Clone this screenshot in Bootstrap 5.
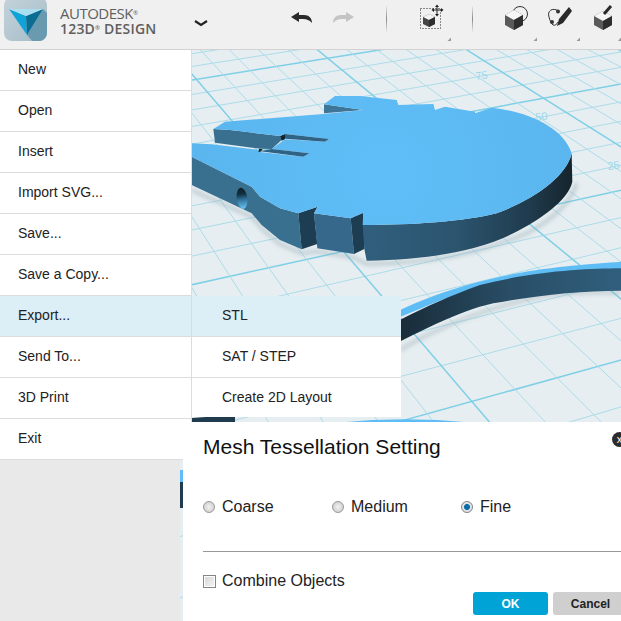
<!DOCTYPE html>
<html lang="en">
<head>
  <meta charset="UTF-8">
  <title>123D Design</title>
  <meta name="viewport" content="width=device-width, initial-scale=1">
  <link href="https://cdn.jsdelivr.net/npm/bootstrap@5.3.0/dist/css/bootstrap.min.css" rel="stylesheet">
  <style>
    body { background: #e9e9e9; font-family: "Liberation Sans", Arial, sans-serif; }
    .app-shell { width: 621px; height: 621px; background: #e9e9e9; }
    .scene { left: 180px; top: 50px; width: 441px; height: 571px; }
    .toolbar { height: 50px; background: #f0f0f0; border-bottom: 1px solid #d2d2d2; }
    .brand { margin-left: 10px; width: 134px; font-family: "Open Sans", sans-serif; color: #5f5f5f; padding-top: 5px; }
    .brand-top { font-size: 15px; line-height: 16px; letter-spacing: -.5px; }
    .brand-bottom { font-size: 14px; line-height: 15px; font-weight: 600; letter-spacing: .2px; }
    .brand sup { font-size: 6px; top: -.7em; }
    .chevron { margin-right: 78px; }
    .tool-sep { width: 1px; height: 26px; margin-top: 6px; background: linear-gradient(#e8e8e8, #8a8a8a 50%, #e8e8e8); }
    .sep-a { margin-left: 6px; margin-right: 13px; }
    .sep-b { margin-left: 6px; margin-right: 27px; }
    .file-menu { width: 192px; }
    .file-menu .list-group-item, .sub-menu .list-group-item {
      height: 41px; padding: 0 0 2px 18px; display: flex; align-items: center;
      font-size: 14px; color: #222; border-color: #dcdcdc; border-width: 0 0 1px 0;
    }
    .file-menu .list-group-item { border-right: 1px solid #dcdcdc; }
    .file-menu .is-open, .sub-menu .is-open { background: #dceef6; }
    .sub-menu { left: 192px; top: 246px; width: 209px; }
    .sub-menu .list-group-item { padding-left: 30px; }
    .sub-menu .list-group-item:last-child { height: 39px; padding-bottom: 0; border-bottom: 0; }
    .mesh-dialog { left: 180px; top: 417px; width: 460px; height: 204px; padding: 5px 0 0 3px; }
    .mesh-body { background: #fff; height: 100%; padding: 12px 0 0 20px; }
    .mesh-title { font-size: 21px; line-height: 26px; color: #111; margin: 0 0 35px; font-weight: 400; }
    .mesh-opt { width: 129px; font-size: 16px; color: #222; line-height: 24px; margin: 0; }
    .mesh-input, .mesh-input:checked { width: 12px; height: 12px; margin: 0 7px 0 0; float: none; border: 1px solid #9a9a9a; background-image: radial-gradient(circle, #f2f2f2, #c6c6c6); }
    .mesh-input:checked { background-image: radial-gradient(circle, #0b6ea8 0, #0b6ea8 2.6px, #e2e2e2 3.4px); border-color: #8e8e8e; }
    .mesh-dialog .mesh-check { width: 13px; height: 13px; margin: 0 6px 0 0; border-radius: 0; border: 1px solid #858585; background-image: linear-gradient(135deg, #d4d4d4, #f6f6f6); box-shadow: inset 0 0 0 1px #fff; }
    .mesh-rule { margin: 32px 0 17px; border-color: #999; opacity: 1; }
    .mesh-btn { position: absolute; top: 170px; width: 75px; height: 23px; padding: 0; font-size: 12px; font-weight: 700; border: 0; border-radius: 3px; }
    .btn-ok { left: 290px; background: #00a3d5; color: #fff; }
    .btn-no { left: 370px; background: #cfcfcf; color: #222; }
    .mesh-close { left: 429px; top: 10px; width: 15px; height: 15px; background: #2c2c2c; color: #fff; font-size: 11px; line-height: 14px; text-align: center; }
  </style>
</head>
<body class="m-0">
  <div class="app-shell position-relative overflow-hidden">

    <!-- 3d view -->
    <svg class="scene position-absolute" viewBox="180 50 441 571" id="scene">
      <defs>
        <linearGradient id="rim" gradientUnits="userSpaceOnUse" x1="550" y1="0" x2="1177" y2="0">
          <stop offset="0" stop-color="#305f7d"/><stop offset=".45" stop-color="#2b546e"/><stop offset=".8" stop-color="#1f3b4d"/><stop offset="1" stop-color="#16242c"/>
        </linearGradient>
        <linearGradient id="rim2" gradientUnits="userSpaceOnUse" x1="60" y1="0" x2="723" y2="0">
          <stop offset="0" stop-color="#192c39"/><stop offset=".5" stop-color="#294e66"/><stop offset="1" stop-color="#305f7d"/>
        </linearGradient>
        <radialGradient id="topface" gradientUnits="userSpaceOnUse" cx="620" cy="370" r="700">
          <stop offset="0" stop-color="#5fbef8"/><stop offset="1" stop-color="#5ab4ec"/>
        </radialGradient>
        <linearGradient id="bore" x1="0" y1="0" x2="0" y2="1">
          <stop offset="0" stop-color="#0f1f29"/><stop offset=".3" stop-color="#14303f"/><stop offset=".55" stop-color="#2f7099"/><stop offset="1" stop-color="#6cc4f6"/>
        </linearGradient>
        <filter id="soft"><feGaussianBlur stdDeviation="6"/></filter>
      </defs>
      <rect x="180" y="50" width="441" height="571" fill="#e6eef1"/>
      <g id="gridLines" fill="none"></g>
      <g fill="#9bd8ea" font-family="Liberation Sans, sans-serif" font-size="11">
        <text transform="translate(476 80) rotate(-8)">75</text>
        <text transform="translate(536 121) rotate(-8)">50</text>
        <text transform="translate(608 170) rotate(-8)">25</text>
      </g>

      <!-- falcon, traced in 3x coordinates -->
      <g transform="translate(180 50) scale(.33333)">
        <path d="M35 420 215 500 250 540 300 582 365 610 410 604 520 622 560 642C750 640 900 612 1050 545 1130 500 1175 450 1190 400" fill="none" stroke="#8fa3ad" stroke-width="10" opacity=".5" filter="url(#soft)"/>
        <path d="M35 320 215 410 240 440 300 475 355 490 365 598 300 570 245 525 215 490 35 405Z" fill="#39708f"/>
        <path d="M355 490 413 470 402 490 412 582 365 598Z" fill="#1d3d52"/>
        <path d="M402 490 512 505 522 612 412 595Z" fill="#35688a"/>
        <path d="M512 505 550 488 553 597 522 612Z" fill="#1d3d52"/>
        <path d="M548 525C700 525 850 515 950 490 1060 450 1160 380 1175 310L1177 395C1165 450 1080 510 1000 550 900 600 750 630 560 632L553 597Z" fill="url(#rim)"/>
        <ellipse cx="186" cy="445" rx="16" ry="32" fill="url(#bore)" transform="rotate(-8 186 445)"/>
        <path d="M432 163 432 190 550 180Z" fill="#3d7699"/>
        <path d="M100 237 105 278 240 296 275 297 305 270 300 258 150 240Z" fill="#39708f"/>
        <path d="M300 258 315 252 315 268 305 272Z" fill="#0f2633"/>
        <path d="M238 296 248 298 240 307 233 304Z" fill="#102834"/>
        <path d="M35 280 95 283 238 300 233 305 370 320 388 310 275 297 315 268 435 275 447 267 315 252 300 258 150 240 100 237 135 215 430 192 550 180 432 163 465 138 540 138 650 150 655 165 760 162 765 180 795 170 885 185 885 190 935 173C1040 185 1150 230 1175 310 1160 380 1060 450 950 490 850 515 700 525 548 525L550 488 512 505 402 490 413 470 355 490 300 475 240 440 215 410 35 320Z" fill="url(#topface)"/>
        <path d="M315 252 447 267 435 275 315 266Z" fill="#2f6385"/>
        <path d="M240 304 370 320 388 310 275 297Z" fill="#2f6385"/>
      </g>

      <!-- second part, lower right -->
      <g transform="translate(380 250) scale(.33333)">
        <path d="M60 300C160 240 300 175 500 136 600 124 680 126 723 128" stroke="#98a9b0" stroke-width="12" fill="none" opacity=".45" filter="url(#soft)"/>
        <path d="M-80 255C60 170 200 112 400 72 520 48 640 42 723 35V60C560 60 420 78 300 112 200 140 100 185 -80 260Z" fill="#5fbdf6"/>
        <path d="M-80 290C0 240 120 170 300 105 470 62 620 56 723 55V122C600 122 480 135 340 160 230 185 130 240 -80 345Z" fill="url(#rim2)"/>
      </g>

      <!-- third part, mostly under the dialog -->
      <path d="M340 424C380 420 420 419 470 424" fill="none" stroke="#5fbdf6" stroke-width="3"/>
      <path d="M180 420C195 417 215 416 235 416V424H180Z" fill="#1f3b4d"/>
      <path d="M178 470H186V482H178Z" fill="#5fbdf6"/>
      <path d="M178 482H186V508H178Z" fill="#1f3b4d"/>
    </svg>

    <header class="toolbar position-relative d-flex align-items-start">
      <svg width="50" height="50" viewBox="0 0 50 50" class="flex-shrink-0">
        <defs>
          <linearGradient id="logoBg" x1="0" y1="0" x2="1" y2="1">
            <stop offset="0" stop-color="#c5d3da"/><stop offset="1" stop-color="#a5bcc8"/>
          </linearGradient>
          <clipPath id="logoClip"><rect x="4" y="-3" width="43" height="44" rx="8"/></clipPath>
        </defs>
        <rect x="4" y="-3" width="43" height="44" rx="8" fill="url(#logoBg)"/>
        <path d="M27 35 43 9 60 26 40 50Z" fill="#6a9ab0" clip-path="url(#logoClip)"/>
        <path d="M9 9 26 16 27 35Z" fill="#0fa3d8"/>
        <path d="M43 9 26 16 27 35Z" fill="#0b6d92"/>
        <path d="M9 9H43L26 16Z" fill="#a9dff0"/>
      </svg>
      <div class="brand flex-shrink-0">
        <div class="brand-top">AUTODESK<sup>®</sup></div>
        <div class="brand-bottom">123D<sup>®</sup> DESIGN</div>
      </div>
      <svg class="chevron flex-shrink-0" width="14" height="50" viewBox="194 0 14 50">
        <path d="M195 21 201 25 207 21" fill="none" stroke="#222" stroke-width="2.2"/>
      </svg>
      <!-- undo redo -->
      <svg width="94" height="50" viewBox="286 0 94 50" class="flex-shrink-0">
        <path d="M291 17 299 12V15H304C309 15 312 18 312 23 309 20 307 19 303 19H299V22Z" fill="#2a2a2a"/>
        <path d="M354 17 346 12V15H341C336 15 333 18 333 23 336 20 338 19 342 19H346V22Z" fill="#c4c4c4"/>
      </svg>
      <div class="tool-sep sep-a flex-shrink-0"></div>
      <!-- move -->
      <svg width="66" height="50" viewBox="400 0 66 50" class="flex-shrink-0">
        <rect x="420.500" y="8.500" width="20" height="20" fill="none" stroke="#222" stroke-dasharray="1 2"/>
        <path d="M423 17 429 14 435 17V24L429 27 423 24Z" fill="#454545"/>
        <path d="M423 17 429 14 435 17 429 20Z" fill="#f4f4f4"/>
        <path d="M429 20 435 17V24L429 27Z" fill="#2e2e2e"/>
        <path d="M437 6V15M433 10H442" stroke="#222" stroke-width="1"/>
        <path d="M437 4.500 439 7H435ZM437 16.500 439 14H435ZM431.500 10 434 8V12ZM443.500 10 441 8V12Z" fill="#222"/>
        <path d="M451 37.500V41H447.500Z" fill="#999"/>
      </svg>
      <div class="tool-sep sep-b flex-shrink-0"></div>
      <!-- primitives -->
      <svg width="43" height="50" viewBox="500 0 43 50" class="flex-shrink-0">
        <circle cx="520" cy="14" r="7.500" fill="#f0f0f0" stroke="#333" stroke-width="1"/>
        <path d="M505 15 514 10 523 15V25L514 30 505 25Z" fill="#5a5a5a"/>
        <path d="M505 15 514 10 523 15 514 20Z" fill="#f6f6f6"/>
        <path d="M514 20 523 15V25L514 30Z" fill="#2e2e2e"/>
        <path d="M537 37.500V41H533.500Z" fill="#999"/>
      </svg>
      <!-- sketch -->
      <svg width="43" height="50" viewBox="543 0 43 50" class="flex-shrink-0">
        <path d="M559 11C552 7 547 11 549 17 550 21 551 23 553 25 555 26 557 24 558 22" fill="none" stroke="#333" stroke-width="1"/>
        <circle cx="558" cy="11.500" r="2" fill="#333"/>
        <circle cx="552" cy="22" r="2" fill="#333"/>
        <path d="M569 7 572 11 563 23 557 26 559 19Z" fill="#2a2a2a"/>
        <path d="M580 37.500V41H576.500Z" fill="#999"/>
      </svg>
      <!-- modify -->
      <svg width="35" height="50" viewBox="586 0 35 50" class="flex-shrink-0">
        <path d="M594 16 603 11 612 16V25L603 30 594 25Z" fill="#5a5a5a"/>
        <path d="M594 16 603 11 612 16 603 21Z" fill="#f6f6f6"/>
        <path d="M603 21 612 16V25L603 30Z" fill="#2e2e2e"/>
        <path d="M604 14 611 6" stroke="#2a2a2a" stroke-width="3"/>
        <path d="M621 37.500V41H618Z" fill="#999"/>
      </svg>
    </header>

    <div class="position-relative">
      <div class="list-group rounded-0 file-menu">
        <div class="list-group-item rounded-0">New</div>
        <div class="list-group-item rounded-0">Open</div>
        <div class="list-group-item rounded-0">Insert</div>
        <div class="list-group-item rounded-0">Import SVG...</div>
        <div class="list-group-item rounded-0">Save...</div>
        <div class="list-group-item rounded-0">Save a Copy...</div>
        <div class="list-group-item rounded-0 is-open">Export...</div>
        <div class="list-group-item rounded-0">Send To...</div>
        <div class="list-group-item rounded-0">3D Print</div>
        <div class="list-group-item rounded-0">Exit</div>
      </div>
      <div class="list-group rounded-0 sub-menu position-absolute">
        <div class="list-group-item rounded-0 is-open">STL</div>
        <div class="list-group-item rounded-0">SAT / STEP</div>
        <div class="list-group-item rounded-0">Create 2D Layout</div>
      </div>
    </div>

    <div class="mesh-dialog position-absolute">
      <div class="mesh-body position-relative">
        <h5 class="mesh-title">Mesh Tessellation Setting</h5>
        <div class="d-flex">
          <label class="mesh-opt d-flex align-items-center"><input class="form-check-input mesh-input" type="radio" name="mesh">Coarse</label>
          <label class="mesh-opt d-flex align-items-center"><input class="form-check-input mesh-input" type="radio" name="mesh">Medium</label>
          <label class="mesh-opt d-flex align-items-center"><input class="form-check-input mesh-input" type="radio" name="mesh" checked>Fine</label>
        </div>
        <hr class="mesh-rule">
        <label class="mesh-opt d-flex align-items-center w-auto"><input class="form-check-input mesh-check" type="checkbox">Combine Objects</label>
        <button class="btn mesh-btn btn-ok" type="button">OK</button>
        <button class="btn mesh-btn btn-no" type="button">Cancel</button>
        <div class="mesh-close position-absolute rounded-circle">x</div>
      </div>
    </div>
  </div>

  <script>
    // ground grid: two pencils of lines through their vanishing points
    var va = [3575, -461], vb = [-173, -353];
    var p0 = [0, 1200], dir = [vb[0] - va[0], vb[1] - va[1]];
    var g = document.getElementById("gridLines");

    function paramOn(v, pt) {
      // where the line v-pt meets the reference line p0 + t*dir
      var dx = pt[0] - v[0], dy = pt[1] - v[1];
      var den = dir[0] * dy - dir[1] * dx;
      return ((v[0] - p0[0]) * dy - (v[1] - p0[1]) * dx) / den;
    }

    function family(v, a, b, n) {
      var ta = paramOn(v, a), tb = paramOn(v, b), step = (tb - ta) / n;
      for (var i = -60; i <= 90; i++) {
        var t = ta + step * i;
        var l = document.createElementNS("http://www.w3.org/2000/svg", "line");
        l.setAttribute("x1", v[0]);
        l.setAttribute("y1", v[1]);
        l.setAttribute("x2", p0[0] + dir[0] * t);
        l.setAttribute("y2", p0[1] + dir[1] * t);
        var major = ((i % 5) + 5) % 5 === 0;
        l.setAttribute("stroke", major ? "#7fcfe6" : "#acdcea");
        l.setAttribute("stroke-width", major ? 1.5 : 1);
        g.appendChild(l);
      }
    }

    family(va, [192, 80], [423, 415], 15);
    family(vb, [467, 50], [415, 335], 10);
  </script>
  <script src="https://cdn.jsdelivr.net/npm/bootstrap@5.3.0/dist/js/bootstrap.bundle.min.js"></script>
</body>
</html>
